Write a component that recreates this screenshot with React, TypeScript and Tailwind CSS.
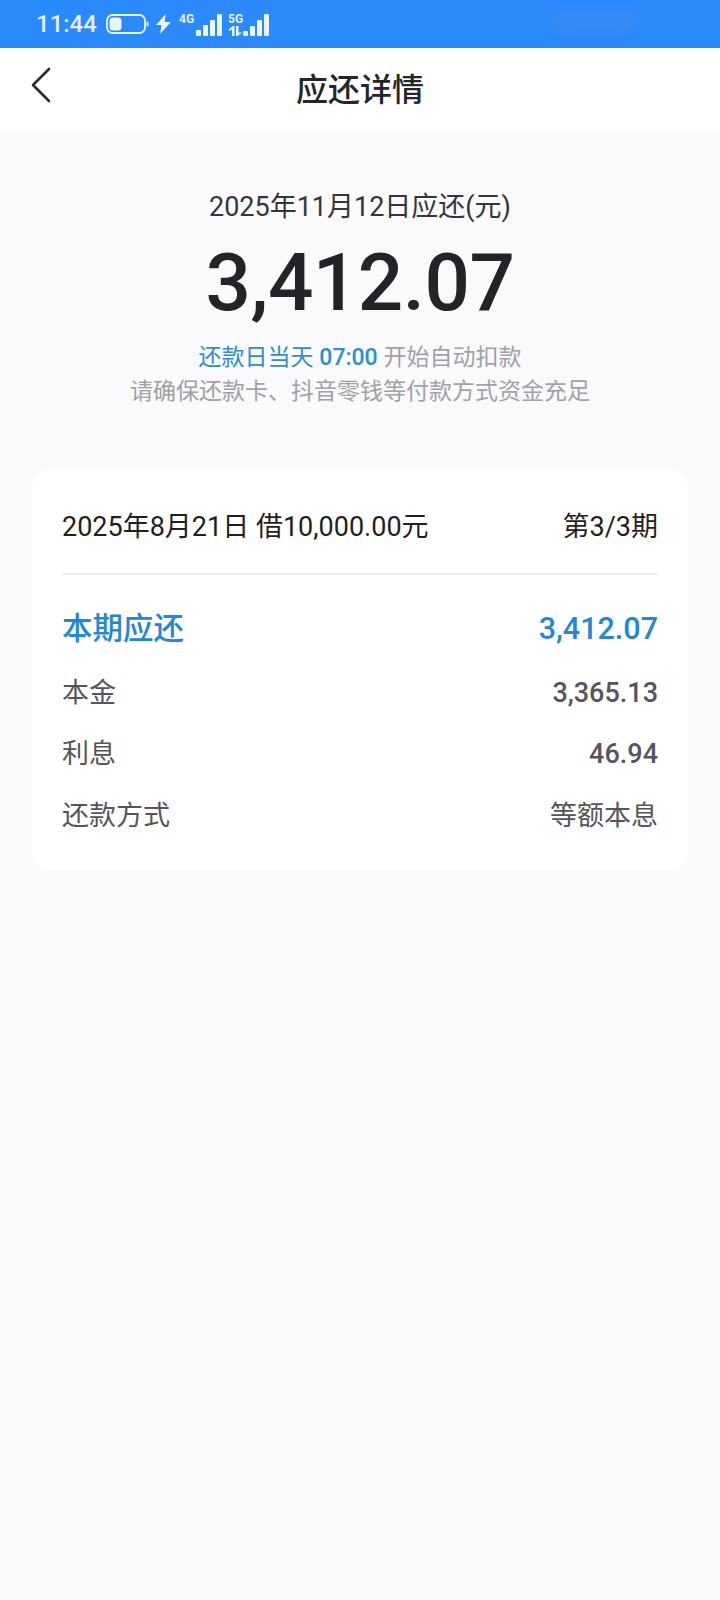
const font = { fontFamily: 'Roboto, "Noto Sans CJK SC", sans-serif' };

function Bars({ heights }: { heights: number[] }) {
  return (
    <div className="flex items-end gap-[2px]">
      {heights.map((h, i) => (
        <div key={i} className="w-[5px] rounded-[1px] bg-[#eaf4ff]" style={{ height: h }} />
      ))}
    </div>
  );
}

function StatusBar() {
  return (
    <div className="relative flex h-[48px] items-center bg-[#2a8afb] pl-[36px] text-[#e3f1ff]">
      <span className="w-[62px] text-[24px] font-medium leading-none">11:44</span>
      <svg className="ml-[8px]" width="43" height="20" viewBox="0 0 43 20" fill="none">
        <rect x="1" y="1" width="38" height="18" rx="5.5" stroke="#eaf4ff" strokeWidth="1.8" />
        <rect x="3.5" y="3.5" width="12" height="13" rx="3.5" fill="#eaf4ff" />
        <rect x="40.5" y="7.5" width="2" height="5" rx="1" fill="#eaf4ff" />
      </svg>
      <svg className="ml-[7px]" width="15" height="20" viewBox="0 0 14 19" fill="#eaf4ff">
        <path d="M9 0 0 10.5h5L3.8 19 14 7.5H8.2L9 0Z" />
      </svg>
      <div className="relative ml-[8px] h-[24px] w-[46px]">
        <span className="absolute left-0 top-[1px] text-[12px] font-bold leading-none">4G</span>
        <div className="absolute bottom-0 left-[17px]">
          <Bars heights={[6, 11, 16, 22]} />
        </div>
      </div>
      <div className="relative ml-[3px] h-[24px] w-[46px]">
        <span className="absolute left-0 top-[1px] text-[12px] font-bold leading-none">5G</span>
        <svg className="absolute bottom-0 left-[1px]" width="13" height="10" viewBox="0 0 13 10" fill="#eaf4ff">
          <path d="M0 3 4 0h1.5v10h-2.5V3.5L0 5ZM7 0h2.5v6.5H13L8.5 10H7Z" />
        </svg>
        <div className="absolute bottom-0 left-[15px]">
          <Bars heights={[5, 10, 16, 22]} />
        </div>
      </div>
      {/* smudged-out area in the screenshot */}
      <div className="absolute left-[550px] top-[8px] h-[26px] w-[90px] rounded-full bg-[#3f8cf0] opacity-40 blur-[5px]" />
    </div>
  );
}

function NavBar() {
  return (
    <div className="relative flex h-[83px] items-center justify-center bg-white">
      <svg className="absolute left-[30px] top-[19px]" width="22" height="36" viewBox="0 0 22 36" fill="none">
        <path d="M19 2 3 18l16 16" stroke="#2b2b30" strokeWidth="2.6" strokeLinecap="round" strokeLinejoin="round" />
      </svg>
      <h1 className="text-[32px] font-medium leading-none text-[#25252a]">应还详情</h1>
    </div>
  );
}

function Row({ label, value, numeric = true }: { label: string; value: string; numeric?: boolean }) {
  return (
    <div className="flex h-[61.5px] items-center justify-between text-[27px] text-[#55555b]">
      <span>{label}</span>
      <span className={numeric ? "font-medium" : ""}>{value}</span>
    </div>
  );
}

export default function App() {
  return (
    <div className="min-h-[1600px] bg-[#faf9fb]" style={font}>
      <StatusBar />
      <NavBar />

      <div className="flex flex-col items-center pt-[59px]">
        <div className="text-[27px] leading-[34px] text-[#35353a]">2025年11月12日应还(元)</div>
        <div className="mt-[11px] text-[80px] font-medium leading-[96px] tracking-[-0.5px] text-[#242428]">3,412.07</div>
        <div className="mt-[10px] text-[23px] leading-[34px] text-[#a1a1a6]">
          <span className="text-[#2e8fcf]">
            还款日当天 <span className="font-medium">07:00</span>
          </span>{" "}
          开始自动扣款
        </div>
        <div className="text-[23px] leading-[34px] text-[#a1a1a6]">请确保还款卡、抖音零钱等付款方式资金充足</div>
      </div>

      <div className="mx-[32px] mt-[62px] rounded-[16px] bg-white px-[30px] pb-[23px]">
        <div className="flex h-[104px] items-center justify-between border-b-2 border-[#ececef] pt-[11px] text-[27px] text-[#1f1f23]">
          <span>2025年8月21日 借10,000.00元</span>
          <span>第3/3期</span>
        </div>
        <div className="flex h-[84px] items-end justify-between pb-[7px] text-[30.5px] font-medium text-[#2386d8]">
          <span>本期应还</span>
          <span>3,412.07</span>
        </div>
        <div className="pt-[3px]">
          <Row label="本金" value="3,365.13" />
          <Row label="利息" value="46.94" />
          <Row label="还款方式" value="等额本息" numeric={false} />
        </div>
      </div>
    </div>
  );
}
